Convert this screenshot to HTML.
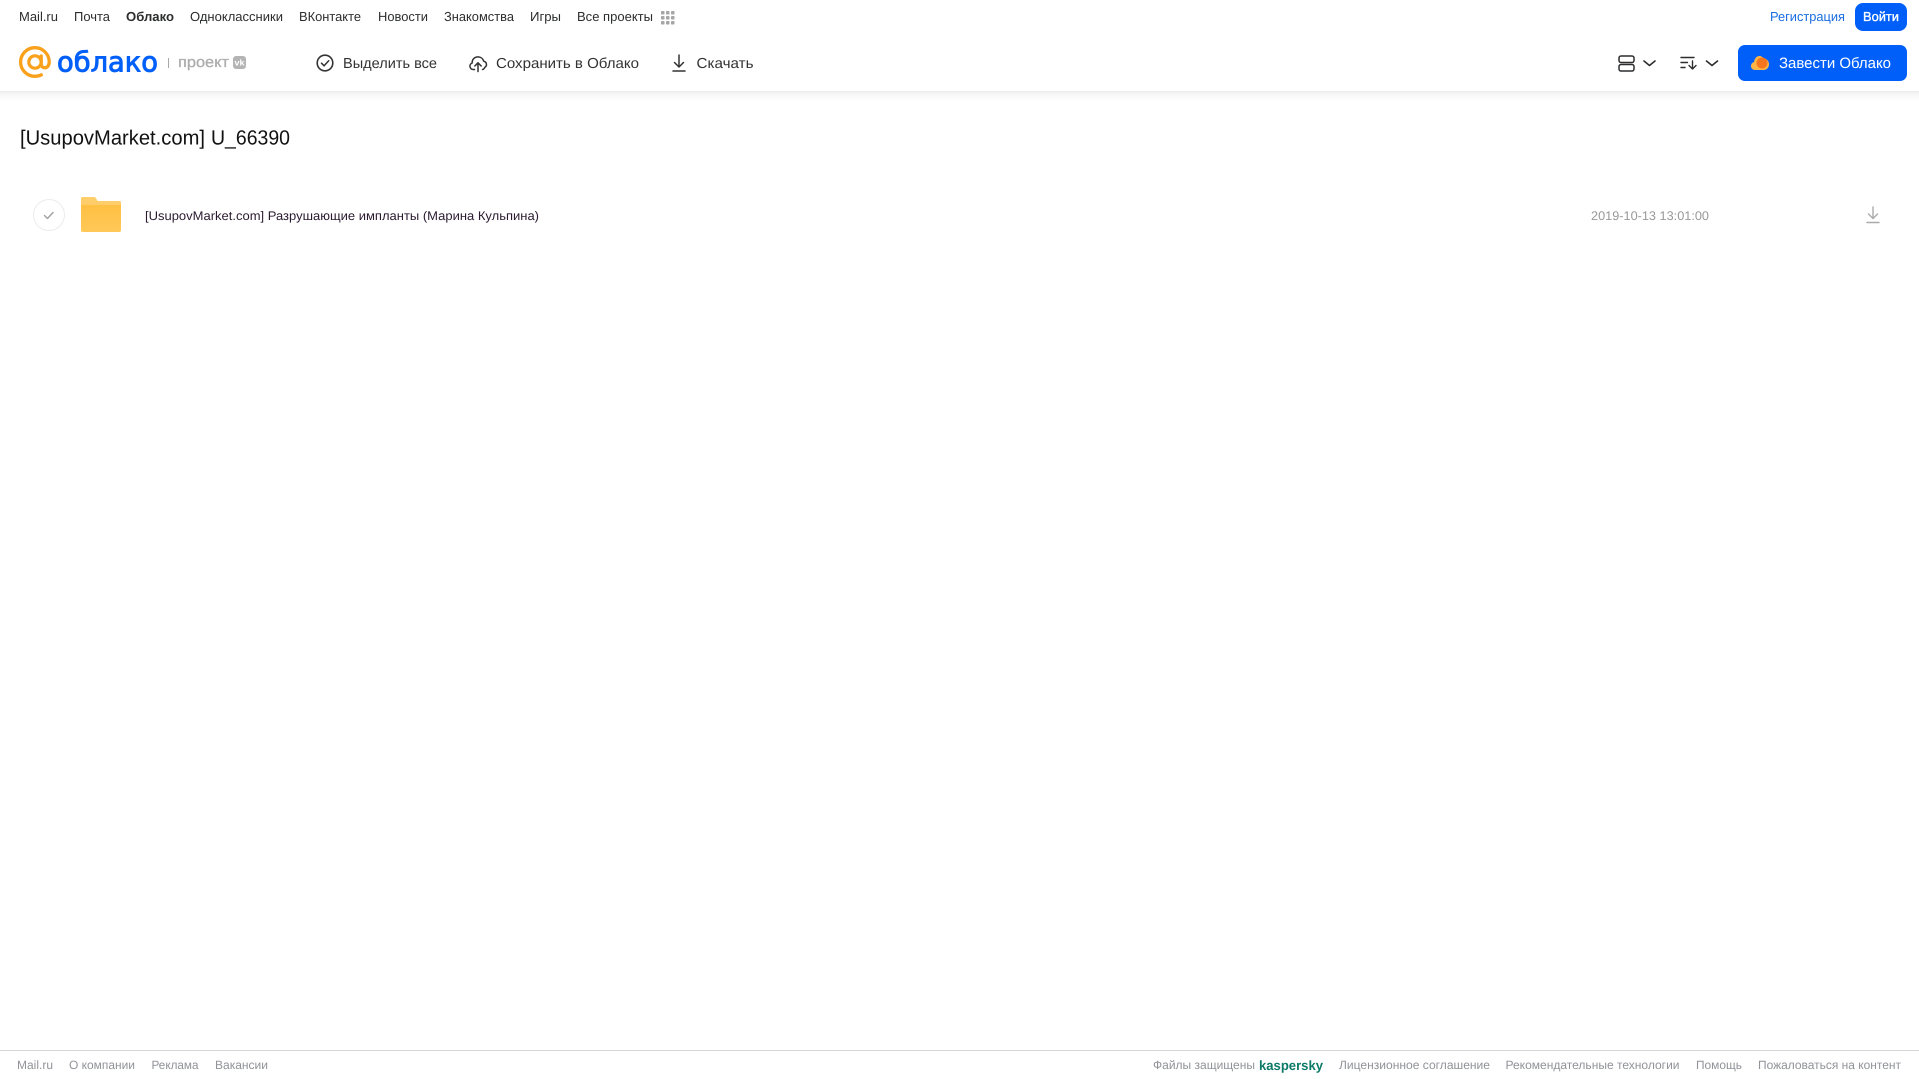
<!DOCTYPE html>
<html lang="ru">
<head>
<meta charset="utf-8">
<title>Облако</title>
<style>
html,body{margin:0;padding:0;background:#fff;width:1919px;height:1079px;overflow:hidden}
svg{position:absolute;left:0;top:0;display:block}
text{font-family:"Liberation Sans",sans-serif}
.n{font-size:13px;fill:#2c2d2e}
.t{font-size:14.5px;fill:#333}
.f{font-size:12px;fill:#919399}
</style>
</head>
<body>
<svg width="1919" height="1079" viewBox="0 0 1919 1079" xmlns="http://www.w3.org/2000/svg" text-rendering="geometricPrecision">
<defs>
<linearGradient id="sh" x1="0" y1="0" x2="0" y2="1"><stop offset="0" stop-color="#ededed"/><stop offset=".3" stop-color="#f6f6f6"/><stop offset="1" stop-color="#fff"/></linearGradient>
<linearGradient id="fo" x1="0" y1="0" x2="0" y2="1"><stop offset="0" stop-color="#ffbe3d"/><stop offset="1" stop-color="#ffc858"/></linearGradient>
</defs>
<rect x="0" y="91" width="1919" height="10" fill="url(#sh)"/>

<!-- top nav -->
<text class="n" x="19" y="21" textLength="39" lengthAdjust="spacingAndGlyphs">Mail.ru</text>
<text class="n" x="74" y="21" textLength="36" lengthAdjust="spacingAndGlyphs">Почта</text>
<text class="n" x="126" y="21" textLength="48" lengthAdjust="spacingAndGlyphs" font-weight="bold">Облако</text>
<text class="n" x="190" y="21" textLength="93" lengthAdjust="spacingAndGlyphs">Одноклассники</text>
<text class="n" x="299" y="21" textLength="62" lengthAdjust="spacingAndGlyphs">ВКонтакте</text>
<text class="n" x="378" y="21" textLength="50" lengthAdjust="spacingAndGlyphs">Новости</text>
<text class="n" x="444" y="21" textLength="70" lengthAdjust="spacingAndGlyphs">Знакомства</text>
<text class="n" x="530" y="21" textLength="31" lengthAdjust="spacingAndGlyphs">Игры</text>
<text class="n" x="577" y="21" textLength="76" lengthAdjust="spacingAndGlyphs">Все проекты</text>
<g fill="#a6a6a6">
<rect x="661" y="11" width="3.5" height="3.5" rx=".8"/><rect x="666" y="11" width="3.5" height="3.5" rx=".8"/><rect x="671" y="11" width="3.5" height="3.5" rx=".8"/>
<rect x="661" y="16" width="3.5" height="3.5" rx=".8"/><rect x="666" y="16" width="3.5" height="3.5" rx=".8"/><rect x="671" y="16" width="3.5" height="3.5" rx=".8"/>
<rect x="661" y="21" width="3.5" height="3.5" rx=".8"/><rect x="666" y="21" width="3.5" height="3.5" rx=".8"/><rect x="671" y="21" width="3.5" height="3.5" rx=".8"/>
</g>
<text class="n" x="1770" y="21" textLength="75" lengthAdjust="spacingAndGlyphs" style="fill:#1a6ee0">Регистрация</text>
<rect x="1855" y="3" width="52" height="28" rx="8" fill="#005ff9"/>
<text class="n" x="1863" y="21" textLength="36" lengthAdjust="spacingAndGlyphs" stroke="#fff" stroke-width=".35" style="fill:#fff">Войти</text>

<!-- logo -->
<g fill="none" stroke="#f9a11b" stroke-linecap="round">
<circle cx="35" cy="62" r="6.200" stroke-width="3.200"/>
<path d="M41.200 56v7.500c0 2.800 1.600 4.300 3.500 4.300 2.700 0 4.500-2.600 4.500-5.800A14.300 14.300 0 1 0 35 76.300c2.400 0 4.300-.4 6.300-1.400" stroke-width="3.300"/>
</g>
<text x="57" y="71.500" font-size="27.500" textLength="101" lengthAdjust="spacingAndGlyphs" fill="#005ff9" stroke="#005ff9" stroke-width=".9" style="font-family:'DejaVu Sans',sans-serif">облако</text>
<rect x="168" y="58" width="1" height="10" fill="#a8a8a8"/>
<text x="178" y="67" font-size="15" textLength="51" lengthAdjust="spacingAndGlyphs" fill="#acacac" stroke="#acacac" stroke-width=".3">проект</text>
<rect x="233" y="56" width="13" height="13" rx="3" fill="#b4b4b4"/>
<text x="234.500" y="65.500" font-size="8.500" font-weight="bold" textLength="10" lengthAdjust="spacingAndGlyphs" fill="#fff">vk</text>

<!-- toolbar -->
<circle cx="325" cy="63" r="7.800" fill="none" stroke="#333" stroke-width="1.600"/>
<path d="M321.500 63.200l2.600 2.600 4.600-5" fill="none" stroke="#333" stroke-width="1.500" stroke-linecap="round" stroke-linejoin="round"/>
<text class="t" x="343" y="68" textLength="94" lengthAdjust="spacingAndGlyphs">Выделить все</text>

<path d="M474.500 69.500h-1.300a3.400 3.400 0 0 1-1-6.600c-.2-3.500 2.400-6 5.800-6 2.700 0 5 1.700 5.700 4.300a3.300 3.300 0 0 1 1.300 6c-.6.400-1 2.300-2.500 2.300" fill="none" stroke="#333" stroke-width="1.500" stroke-linecap="round" stroke-linejoin="round"/>
<path d="M478 71.500v-8.500M474.800 66l3.200-3.200 3.200 3.200" fill="none" stroke="#333" stroke-width="1.500" stroke-linecap="round" stroke-linejoin="round"/>
<text class="t" x="496" y="68" textLength="143" lengthAdjust="spacingAndGlyphs">Сохранить в Облако</text>

<path d="M679 55v11.500M674.500 62.500l4.500 4.500 4.500-4.500M673 71h12" fill="none" stroke="#333" stroke-width="1.500" stroke-linecap="round" stroke-linejoin="round"/>
<text class="t" x="696.500" y="68" textLength="57" lengthAdjust="spacingAndGlyphs">Скачать</text>

<!-- right toolbar -->
<rect x="1619" y="56" width="15" height="6.500" rx="2" fill="none" stroke="#2c2d2e" stroke-width="1.500"/>
<rect x="1619" y="64.500" width="15" height="6.500" rx="2" fill="none" stroke="#2c2d2e" stroke-width="1.500"/>
<path d="M1644 61l5.500 4.500 5.500-4.500" fill="none" stroke="#2c2d2e" stroke-width="1.600" stroke-linecap="round" stroke-linejoin="round"/>
<path d="M1681 57.500h13M1681 62.500h6.500M1681 67.500h4" fill="none" stroke="#2c2d2e" stroke-width="1.400" stroke-linecap="round"/>
<path d="M1692.500 61v8M1689 65.500l3.500 3.500 3.500-3.500" fill="none" stroke="#2c2d2e" stroke-width="1.400" stroke-linecap="round" stroke-linejoin="round"/>
<path d="M1706.500 61l5.500 4.500 5.500-4.500" fill="none" stroke="#2c2d2e" stroke-width="1.600" stroke-linecap="round" stroke-linejoin="round"/>

<rect x="1738" y="45" width="169" height="36" rx="7" fill="#005ff9"/>
<path d="M1755 70a4 4 0 0 1-3.500-6c.4-1 1.500-1.700 2.500-1.900.5-3.500 2.500-6.100 5.300-6.100 2 0 3.500 1 4.400 2.600 3-.2 5.300 2.500 5.300 5.700 0 3.200-2.300 5.700-5 5.700z" fill="#fdb545"/>
<circle cx="1762" cy="63" r="5.500" fill="#f5761f"/>
<text x="1779" y="68" font-size="15" textLength="112" lengthAdjust="spacingAndGlyphs" fill="#fff">Завести Облако</text>

<!-- title -->
<text x="20" y="144.500" font-size="20.500" textLength="185" lengthAdjust="spacingAndGlyphs" fill="#111">[UsupovMarket.com]</text>
<text x="211" y="144.500" font-size="20.500" textLength="79" lengthAdjust="spacingAndGlyphs" fill="#111">U_66390</text>

<!-- row -->
<circle cx="49" cy="215" r="15.500" fill="#fff" stroke="#ececec" stroke-width="1"/>
<path d="M44.500 215.500l3 3 5.500-6" fill="none" stroke="#a0a0a0" stroke-width="1.400" stroke-linecap="round" stroke-linejoin="round"/>
<path d="M83 197h10c1.500 0 2.300.6 3 1.500l1.500 2.500H119a2 2 0 0 1 2 2v27a2 2 0 0 1-2 2H83a2 2 0 0 1-2-2V199a2 2 0 0 1 2-2z" fill="url(#fo)"/>
<path d="M83 197h10c1.500 0 2.300.6 3 1.500l1.500 2.500H119a2 2 0 0 1 2 2v2H81v-6a2 2 0 0 1 2-2z" fill="#ffcd69"/>
<text x="145" y="220" font-size="12.500" textLength="394" lengthAdjust="spacingAndGlyphs" fill="#2a1a30">[UsupovMarket.com] Разрушающие импланты (Марина Кульпина)</text>
<text x="1591" y="220" font-size="12.500" textLength="118" lengthAdjust="spacingAndGlyphs" fill="#999">2019-10-13 13:01:00</text>
<path d="M1873 207v11.500M1868.500 214l4.500 4.500 4.500-4.500M1867 222.500h12" fill="none" stroke="#aaa" stroke-width="1.400" stroke-linecap="round" stroke-linejoin="round"/>

<!-- footer -->
<rect x="0" y="1050" width="1919" height="1" fill="#d6d6d6"/>
<text class="f" x="17" y="1069" textLength="36" lengthAdjust="spacingAndGlyphs">Mail.ru</text>
<text class="f" x="69" y="1069" textLength="66" lengthAdjust="spacingAndGlyphs">О компании</text>
<text class="f" x="151.500" y="1069" textLength="47" lengthAdjust="spacingAndGlyphs">Реклама</text>
<text class="f" x="215" y="1069" textLength="53" lengthAdjust="spacingAndGlyphs">Вакансии</text>
<text class="f" x="1153" y="1069" textLength="102" lengthAdjust="spacingAndGlyphs">Файлы защищены</text>
<text x="1259" y="1070" font-size="13.500" font-weight="bold" textLength="64" lengthAdjust="spacingAndGlyphs" fill="#0c7a68">kaspersky</text>
<text class="f" x="1339" y="1069" textLength="151" lengthAdjust="spacingAndGlyphs">Лицензионное соглашение</text>
<text class="f" x="1505.500" y="1069" textLength="174" lengthAdjust="spacingAndGlyphs">Рекомендательные технологии</text>
<text class="f" x="1696" y="1069" textLength="46" lengthAdjust="spacingAndGlyphs">Помощь</text>
<text class="f" x="1758" y="1069" textLength="143" lengthAdjust="spacingAndGlyphs">Пожаловаться на контент</text>
</svg>
</body>
</html>
